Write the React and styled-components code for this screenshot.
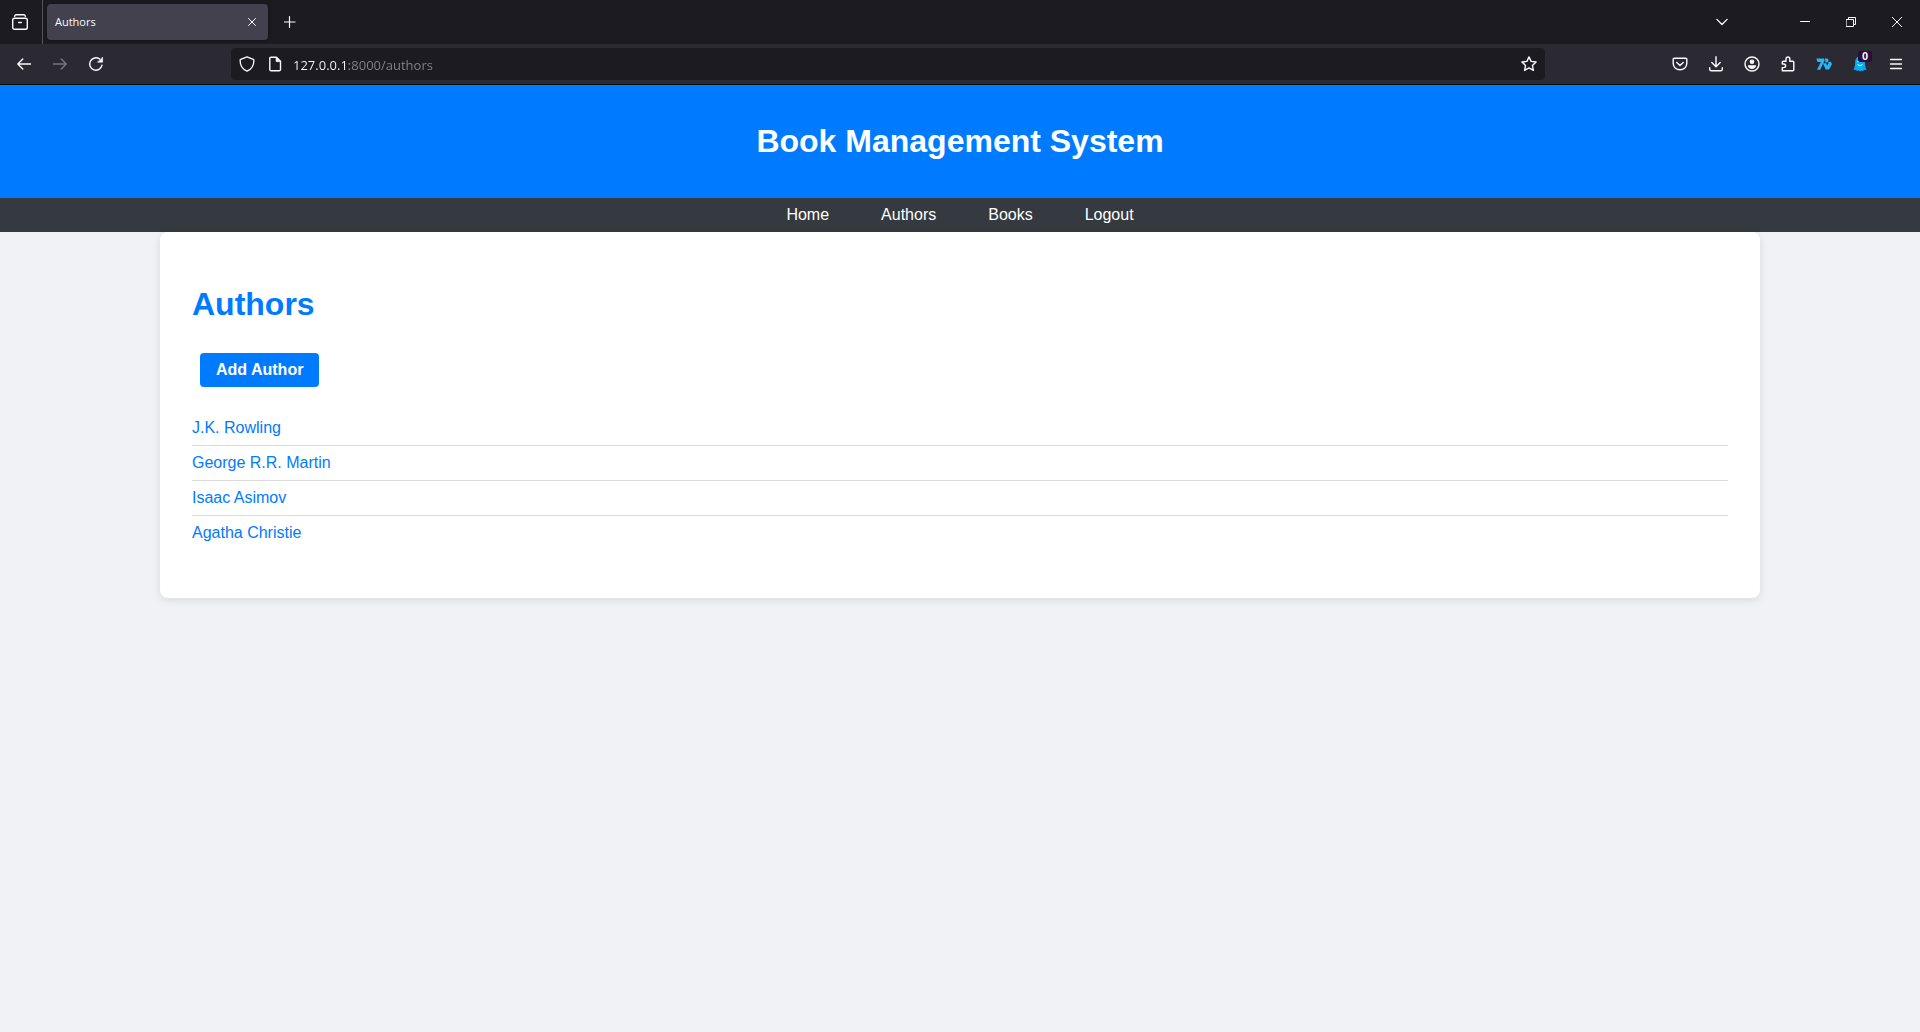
import React from "react";
import styled, { createGlobalStyle } from "styled-components";

const GlobalStyle = createGlobalStyle`
  *, *::before, *::after { box-sizing: border-box; }
  html, body, #root { height: 100%; }
  body {
    margin: 0;
    background: #f0f2f5;
    font-family: "Liberation Sans", Arial, sans-serif;
    font-size: 16px;
    line-height: 18px;
  }
`;

const Window = styled.div`
  min-height: 100%;
  display: flex;
  flex-direction: column;
`;

const Chrome = styled.div`
  font-family: "Open Sans", "Noto Sans", sans-serif;
  color: #fbfbfe;
  background: #2b2a33;
  border-bottom: 1px solid #0c0c0d;
`;

const TabStrip = styled.div`
  display: flex;
  align-items: center;
  height: 44px;
  background: #1c1b22;
`;

const ToolBar = styled.div`
  display: flex;
  align-items: center;
  height: 40px;
  padding: 0 6px;
`;

const IconButton = styled.button`
  display: flex;
  align-items: center;
  justify-content: center;
  flex: none;
  width: ${(p) => p.$width || 36}px;
  height: ${(p) => p.$height || 32}px;
  padding: 0;
  border: 0;
  border-radius: 4px;
  background: none;
  color: ${(p) => (p.disabled ? "#77767e" : "#fbfbfe")};
  position: relative;
`;

const ViewArea = styled.div`
  display: flex;
  align-items: center;
  height: 100%;
  padding: 0 4px 0 2px;
  border-right: 1px solid #54535a;
`;

const Tab = styled.div`
  display: flex;
  align-items: center;
  justify-content: space-between;
  width: 221px;
  height: 36px;
  margin: 0 4px;
  padding: 0 4px 0 8px;
  border-radius: 4px;
  background: #42414d;
  box-shadow: 0 0 4px rgba(0, 0, 0, 0.4);
  font-size: 11px;
`;

const WindowControls = styled.div`
  display: flex;
  height: 100%;
  margin-left: auto;
  align-items: center;
`;

const Gap = styled.div`
  flex: none;
  width: ${(p) => p.$width}px;
`;

const UrlBar = styled.label`
  display: flex;
  align-items: center;
  flex: 1;
  min-width: 0;
  height: 32px;
  padding: 0 2px;
  border-radius: 4px;
  background: #1c1b22;
`;

const UrlInput = styled.input`
  flex: 1;
  min-width: 0;
  height: 24px;
  margin-left: 4px;
  padding: 2px 0 0;
  border: 0;
  outline: 0;
  font: inherit;
  font-size: 13px;
  color: transparent;
  background: linear-gradient(to right, #fbfbfe 56px, #85848c 56px);
  background-clip: text;
  -webkit-background-clip: text;
`;

const Badge = styled.span`
  position: absolute;
  top: 3px;
  right: 6px;
  width: 14px;
  height: 11px;
  border-radius: 2px;
  background: #2f0a3c;
  color: #fff;
  font-size: 11px;
  line-height: 11px;
  font-weight: 700;
  text-align: center;
`;

const SiteHeader = styled.header`
  padding: 38px 20px;
  background: #007bff;
  color: #fff;
  text-align: center;
`;

const Title = styled.h1`
  margin: 0;
  font-size: 32px;
  line-height: 37px;
  color: ${(p) => p.$color};
`;

const SiteNav = styled.nav`
  display: flex;
  justify-content: center;
  gap: 52px;
  padding: 8px;
  background: #343a40;
`;

const NavLink = styled.a`
  color: #fff;
  text-decoration: none;
`;

const Card = styled.main`
  width: calc(100% - 320px);
  max-width: 1600px;
  margin: 0 auto;
  padding: 54px 32px 48px;
  border-radius: 8px;
  background: #fff;
  box-shadow: 0 2px 8px rgba(0, 0, 0, 0.1);
`;

const AddLink = styled.a`
  display: inline-block;
  margin: 30px 8px 24px;
  padding: 8px 16px;
  border-radius: 4px;
  background: #007bff;
  color: #fff;
  font-weight: 700;
  text-decoration: none;
  vertical-align: top;
`;

const AuthorList = styled.ul`
  margin: 0;
  padding: 0;
  list-style: none;
`;

const AuthorRow = styled.li`
  padding: 8px 0;
  border-bottom: 1px solid #dadbdd;
  &:last-child { border-bottom: 0; }
`;

const AuthorLink = styled.a`
  color: #007bff;
  text-decoration: none;
`;

const Icon = ({ size = 16, width = 1.3, children }) => (
  <svg
    width={size}
    height={size}
    viewBox={`0 0 ${size} ${size}`}
    fill="none"
    stroke="currentColor"
    strokeWidth={width}
    strokeLinecap="round"
    strokeLinejoin="round"
    aria-hidden="true"
  >
    {children}
  </svg>
);

const authors = ["J.K. Rowling", "George R.R. Martin", "Isaac Asimov", "Agatha Christie"];
const links = ["Home", "Authors", "Books", "Logout"];

export default function App() {
  return (
    <Window>
      <GlobalStyle />
      <Chrome>
        <TabStrip>
          <ViewArea>
            <IconButton aria-label="Recent browsing">
              <Icon width={1.4}>
                <path d="M2.6 2.4C2.9 1.2 3.4.7 4.3.7h7.4c.9 0 1.4.5 1.7 1.7" />
                <rect x=".7" y="4.2" width="14.6" height="11" rx="1.8" />
                <path d="M6.7 8.5h2.6" />
              </Icon>
            </IconButton>
          </ViewArea>
          <Tab>
            <span>Authors</span>
            <IconButton $width={24} $height={24} aria-label="Close tab">
              <Icon size={8} width={1}><path d="M.5.5l7 7M7.5.5l-7 7" /></Icon>
            </IconButton>
          </Tab>
          <IconButton aria-label="New tab">
            <Icon size={12} width={1.2}><path d="M5.500.6v10.800M.2 6h10.800" /></Icon>
          </IconButton>
          <WindowControls>
            <IconButton aria-label="List all tabs">
              <Icon size={12} width={1.3}><path d="M.9 3.4L6 8.5l5.1-5.1" /></Icon>
            </IconButton>
            <Gap $width={42} />
            <IconButton $width={46} aria-label="Minimize">
              <Icon size={10} width={1}><path d="M.5 4.5h9" /></Icon>
            </IconButton>
            <IconButton $width={46} aria-label="Restore">
              <Icon size={10} width={1}>
                <path d="M.5 2.5h7v7h-7zM2.5 2.5v-2h7v7h-2" />
              </Icon>
            </IconButton>
            <IconButton $width={46} aria-label="Close window">
              <Icon size={10} width={1}><path d="M.2.2l9.6 9.6M9.8.2L.2 9.8" /></Icon>
            </IconButton>
          </WindowControls>
        </TabStrip>

        <ToolBar>
          <IconButton aria-label="Back">
            <Icon width={1.4}><path d="M14.5 8H1.8M6.8 3L1.8 8l5 5" /></Icon>
          </IconButton>
          <IconButton disabled aria-label="Forward">
            <Icon width={1.4}><path d="M1.5 8h12.7M9.2 3l5 5-5 5" /></Icon>
          </IconButton>
          <IconButton aria-label="Reload">
            <Icon width={1.4}>
              <path d="M14 9.2A6.2 6.2 0 1 1 11.6 3" />
              <path d="M14.6 1.4v4.8H9.8z" fill="currentColor" strokeWidth=".6" />
            </Icon>
          </IconButton>
          <Gap $width={117} />
          <UrlBar>
            <IconButton $width={28} $height={28} aria-label="Tracking protection">
              <Icon>
                <path d="M8 .8L14.3 3.4c.4.2.6.5.6.9 0 4.6-2.1 9-6.9 10.9C3.2 13.3 1.1 8.9 1.1 4.3c0-.4.2-.7.6-.9z" />
              </Icon>
            </IconButton>
            <IconButton $width={28} $height={28} aria-label="Site information">
              <Icon width={1.4}>
                <path d="M4 1.2h5.4l4.1 4.1V13.5a1.2 1.2 0 0 1-1.2 1.2H4a1.2 1.2 0 0 1-1.2-1.2V2.4A1.2 1.2 0 0 1 4 1.2z" />
                <path d="M9.2 1.4v4.2h4.2z" fill="currentColor" strokeWidth=".8" />
              </Icon>
            </IconButton>
            <UrlInput aria-label="Address" defaultValue="127.0.0.1:8000/authors" spellCheck={false} />
            <IconButton $width={28} $height={28} aria-label="Bookmark this page">
              <Icon width={1.4}>
                <path d="M8 .9l2.1 4.5 5 .6-3.700 3.400 1 5L8 11.900l-4.400 2.500 1-5L.9 6l5-.6z" />
              </Icon>
            </IconButton>
          </UrlBar>
          <Gap $width={117} />
          <IconButton aria-label="Save to Pocket">
            <Icon width={1.4}>
              <path d="M2.2 2.2h11.600a1 1 0 0 1 1 1V7.500a6.800 6.300 0 0 1-13.600 0V3.200a1 1 0 0 1 1-1z" />
              <path d="M4.8 6.4L8 9.4l3.200-3" />
            </Icon>
          </IconButton>
          <IconButton aria-label="Downloads">
            <Icon width={1.4}>
              <path d="M8 .8v9.800M3.800 6.600L8 10.800l4.200-4.200M1.700 11.800v1.400a1.500 1.500 0 0 0 1.500 1.500h9.600a1.500 1.500 0 0 0 1.500-1.500v-1.400" />
            </Icon>
          </IconButton>
          <IconButton aria-label="Account">
            <Icon width={1.4}>
              <circle cx="8" cy="8" r="7" />
              <circle cx="8" cy="5.7" r="2.3" fill="currentColor" stroke="none" />
              <path d="M3.8 9.2h8.400c0 2.300-2 3.700-4.200 3.700s-4.200-1.400-4.200-3.700z" fill="currentColor" stroke="none" />
            </Icon>
          </IconButton>
          <IconButton aria-label="Extensions">
            <Icon width={1.4}>
              <path d="M2.300 14.700V11.600h1.500a1.800 1.800 0 0 0 0-3.600H2.300V6.200a1 1 0 0 1 1-1H6V2.900a1.900 1.900 0 0 1 3.800 0v2.300h3a1 1 0 0 1 1 1v7.500a1 1 0 0 1-1 1z" />
            </Icon>
          </IconButton>
          <IconButton aria-label="7TV">
            <Icon>
              <g fill="#29b6f6" stroke="none">
                <path d="M.3 2.400h7.500l.9 1.800-4.500 9.500H1L4.900 5.900H1.500z" />
                <path d="M8.800 2.400h2.800l1 1.900-1.100 2.200h-2zM6.900 7.300h3.200l1.100 2.400 1.300-2.400-.4-1.500h2.600l1.300 2.100-2.900 5.600H9.700z" />
              </g>
            </Icon>
          </IconButton>
          <IconButton aria-label="Ghostery">
            <Icon>
              <path d="M8 .5c3 0 4.700 2 4.800 5.300.1 3.400.5 5.800 1.600 7.900-1 .7-1.900.5-2.500 0-.4 1.500-1.700 1.800-2.300.5-.5 1.500-2.500 1.500-3.100 0-.7 1.300-2 1-2.400-.5-.6.5-1.500.7-2.500 0 1.100-2.100 1.500-4.500 1.600-7.900C3.300 2.500 5 .5 8 .5z" fill="#00aef0" stroke="none" />
              <path d="M5.700 8.300c1 1.900 3.600 1.900 4.600 0" stroke="#fff" strokeWidth="1" />
              <circle cx="6" cy="5.500" r=".8" fill="#fff" stroke="none" />
            </Icon>
            <Badge>0</Badge>
          </IconButton>
          <IconButton aria-label="Application menu">
            <Icon width={1.3}><path d="M2.5 3.5h11M2.5 8h11M2.5 12.5h11" /></Icon>
          </IconButton>
        </ToolBar>
      </Chrome>

      <SiteHeader>
        <Title $color="#fff">Book Management System</Title>
      </SiteHeader>
      <SiteNav>
        {links.map((name) => (
          <NavLink key={name} href={`#${name.toLowerCase()}`}>{name}</NavLink>
        ))}
      </SiteNav>
      <Card>
        <Title as="h2" $color="#007bff">Authors</Title>
        <AddLink href="#add">Add Author</AddLink>
        <AuthorList>
          {authors.map((name) => (
            <AuthorRow key={name}>
              <AuthorLink href="#author">{name}</AuthorLink>
            </AuthorRow>
          ))}
        </AuthorList>
      </Card>
    </Window>
  );
}
